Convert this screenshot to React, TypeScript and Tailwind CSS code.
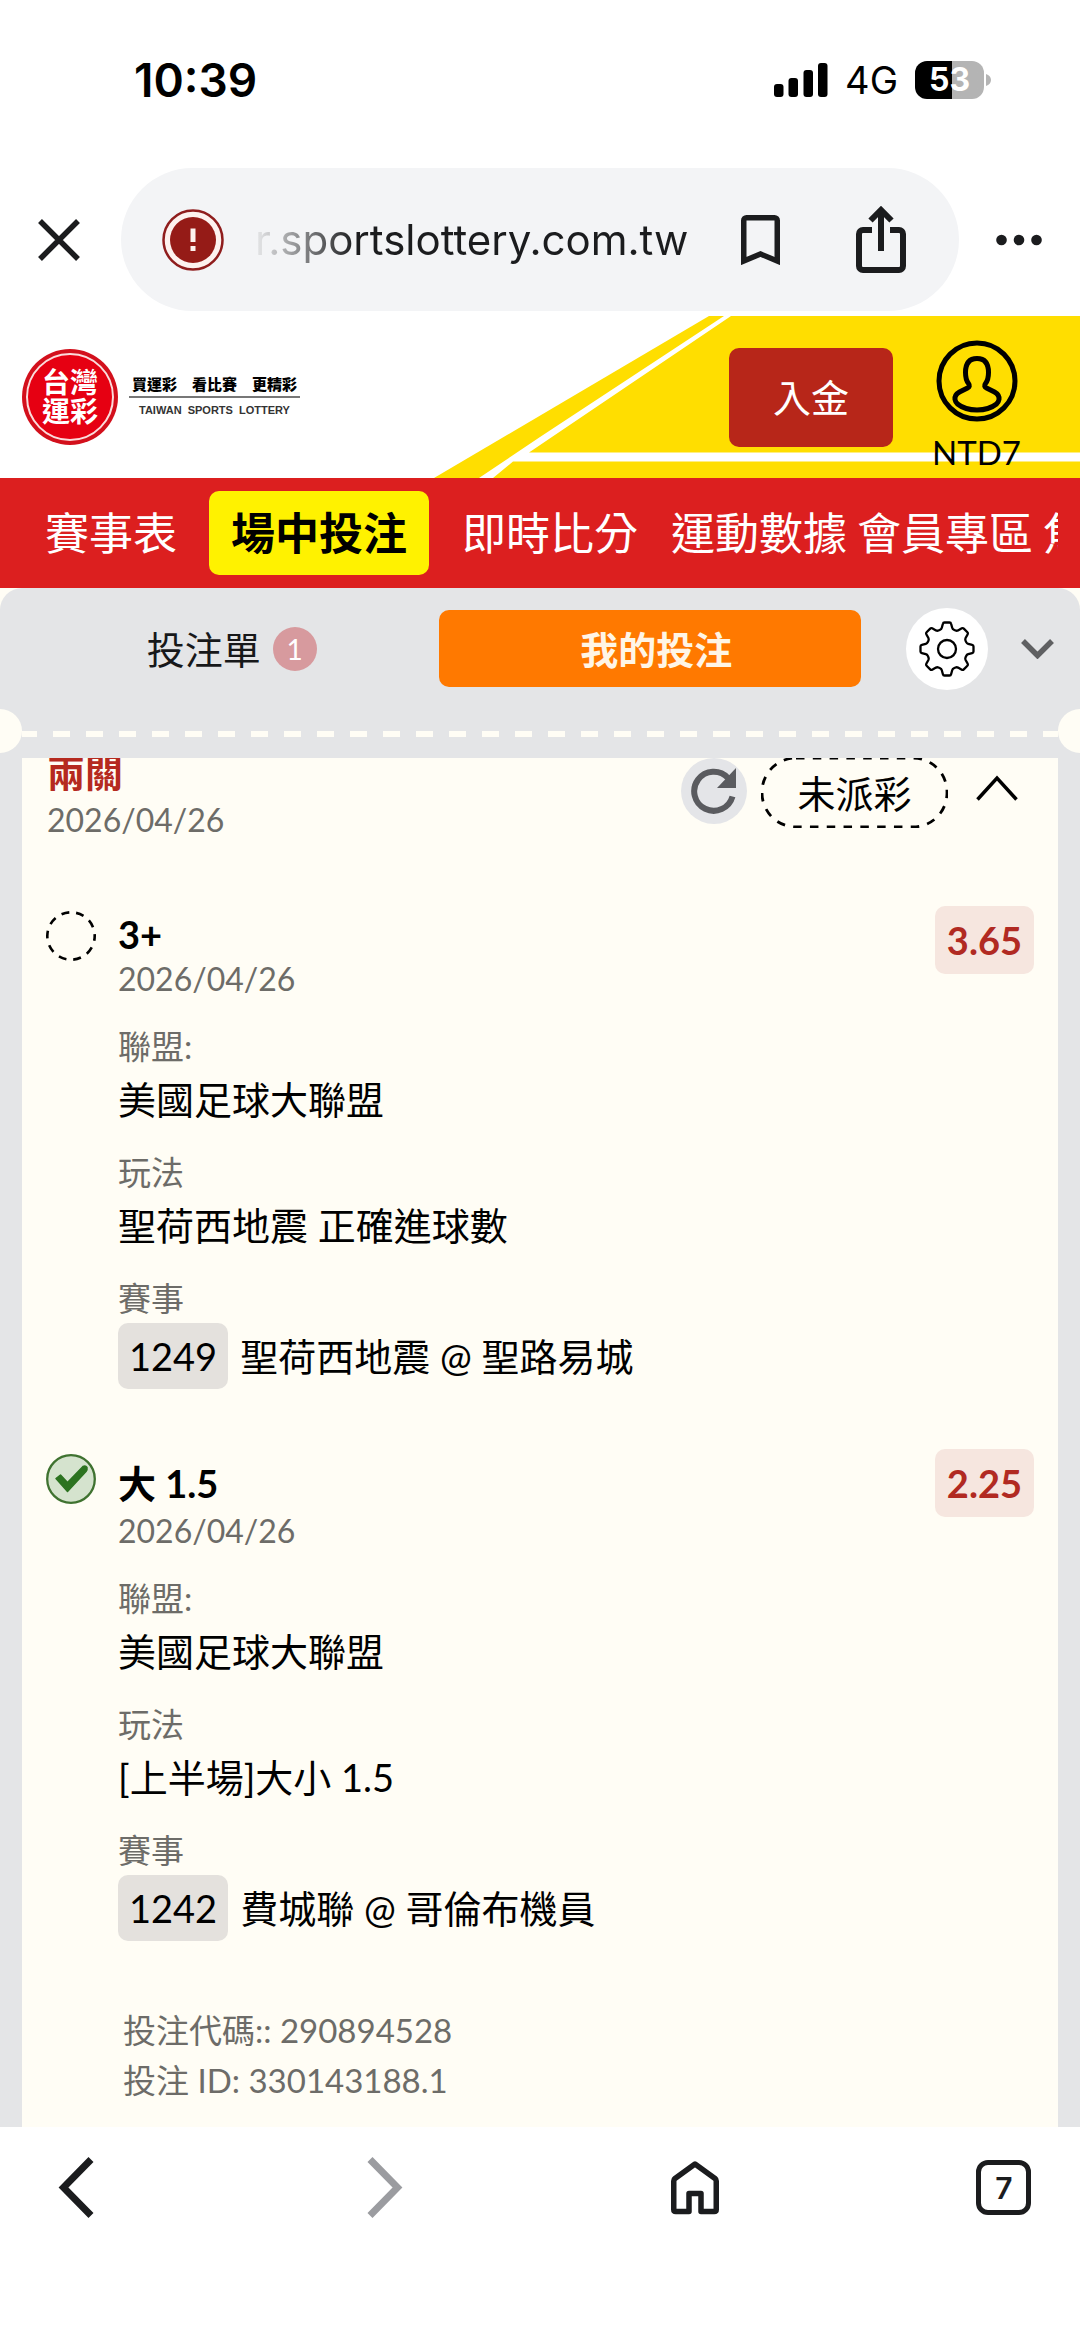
import React from 'react';

interface Selection {
  title: string;
  date: string;
  odds: string;
  league: string;
  market: string;
  eventNo: string;
  match: string;
  won: boolean;
}

const selections: Selection[] = [
  {
    title: '3+',
    date: '2026/04/26',
    odds: '3.65',
    league: '美國足球大聯盟',
    market: '聖荷西地震 正確進球數',
    eventNo: '1249',
    match: '聖荷西地震 @ 聖路易城',
    won: false,
  },
  {
    title: '大 1.5',
    date: '2026/04/26',
    odds: '2.25',
    league: '美國足球大聯盟',
    market: '[上半場]大小 1.5',
    eventNo: '1242',
    match: '費城聯 @ 哥倫布機員',
    won: true,
  },
];

const StatusBar: React.FC = () => (
  <div className="flex h-[160px] items-center justify-between pl-[134px] pr-[89px] font-['Inter','Liberation_Sans',sans-serif] text-black">
    <span className="text-[46px] font-semibold leading-none">10:39</span>
    <div className="flex items-center gap-[17px]">
      <svg width="54" height="34" viewBox="0 0 54 34" aria-hidden="true">
        <rect x="0" y="21" width="9.5" height="13" rx="3" />
        <rect x="14.5" y="15" width="9.5" height="19" rx="3" />
        <rect x="29.5" y="7" width="9.5" height="27" rx="3" />
        <rect x="44" y="0" width="9.5" height="34" rx="3" />
      </svg>
      <span className="text-[38px] leading-none">4G</span>
      <div className="flex items-center gap-[2px]">
        <div className="flex h-[38px] w-[69px] items-center justify-center rounded-[12px] bg-linear-to-r from-black from-53% to-[#b4b4b4] to-53%">
          <span className="text-[32px] font-bold leading-none text-white">53</span>
        </div>
        <svg width="5" height="12" viewBox="0 0 5 12" aria-hidden="true">
          <path d="M0 0c3 1 5 3 5 6s-2 5-5 6z" fill="#b4b4b4" />
        </svg>
      </div>
    </div>
  </div>
);

const AddressBar: React.FC = () => (
  <div className="flex h-[156px] items-start justify-between px-[38px] pt-2 text-[#1b1c1e]">
    <button aria-label="關閉" className="flex h-[143px] items-center">
      <svg width="42" height="42" viewBox="0 0 42 42" fill="none" stroke="currentColor" strokeWidth="5.5">
        <path d="M2 2l38 38M40 2L2 40" />
      </svg>
    </button>
    <div className="ml-[41px] mr-[37px] flex h-[143px] flex-1 items-center rounded-full bg-[#f3f4f6] pl-[41px] pr-[53px]">
      <svg width="62" height="62" viewBox="0 0 62 62" className="shrink-0" aria-hidden="true">
        <circle cx="31" cy="31" r="29.5" fill="#fdf1ee" stroke="#8f1d1d" strokeWidth="2.5" />
        <circle cx="31" cy="31" r="23" fill="#951b17" />
        <path d="M31 19.5v13.500M31 37v5" stroke="#fdf1ee" strokeWidth="5" />
      </svg>
      <span className="ml-[31px] flex-1 bg-linear-to-r from-[#1b1c1e]/5 to-[#1b1c1e] to-[100px] bg-clip-text font-['Inter','Liberation_Sans',sans-serif] text-[42px] leading-[60px] whitespace-nowrap text-transparent">
        r.sportslottery.com.tw
      </span>
      <button aria-label="書籤" className="mr-[76px] shrink-0">
        <svg width="39" height="50" viewBox="0 0 39 50" fill="none" stroke="currentColor" strokeWidth="5.5">
          <path d="M2.75 46V5.500a2.750 2.750 0 0 1 2.750-2.750h28a2.750 2.750 0 0 1 2.750 2.750V46L19.500 39z" />
        </svg>
      </button>
      <button aria-label="分享" className="shrink-0">
        <svg width="50" height="67" viewBox="0 0 50 67" fill="none" stroke="currentColor" strokeWidth="6">
          <path d="M16 24H7a4 4 0 0 0-4 4v32a4 4 0 0 0 4 4h36a4 4 0 0 0 4-4V28a4 4 0 0 0-4-4h-9" />
          <path d="M25 45V5M14.500 14.500L25 4l10.500 10.500" />
        </svg>
      </button>
    </div>
    <button aria-label="更多" className="flex h-[143px] items-center">
      <svg width="46" height="12" viewBox="0 0 46 12" fill="currentColor">
        <circle cx="5.5" cy="6" r="5.3" />
        <circle cx="23" cy="6" r="5.3" />
        <circle cx="40.5" cy="6" r="5.3" />
      </svg>
    </button>
  </div>
);

const SiteHeader: React.FC = () => (
  <header className="relative flex h-[162px] items-start justify-between pl-[22px] pr-[60px] text-black">
    {/* Yellow swoosh behind the right half */}
    <svg
      className="absolute inset-y-0 right-0 h-full"
      width="646"
      height="162"
      viewBox="434 316 646 162"
      aria-hidden="true"
    >
      <path d="M709 316H1080V478H434z" fill="#ffde00" />
      <path d="M724 316h7L529 452.500H1080v9H513L493 478H479L540 437z" fill="#fff" />
    </svg>

    <a href="#home" className="relative flex items-center pt-[33px]" aria-label="台灣運彩">
      <span className="flex size-24 items-center justify-center rounded-full bg-[#d3101c] p-1">
        <span className="flex size-[88px] flex-col items-center justify-center rounded-full border-2 border-[#fbdcdc] bg-[#e60012] text-[28px] font-bold leading-[29px] text-white">
          <span>台灣</span>
          <span>運彩</span>
        </span>
      </span>
      <span className="ml-[11px] flex flex-col items-center">
        <span className="text-[15px] font-black leading-6 whitespace-nowrap">買運彩　看比賽　更精彩</span>
        <span className="h-[2px] w-[171px] bg-[#777]" />
        <span className="font-['Liberation_Sans',sans-serif] text-[11px] font-bold leading-6 whitespace-nowrap text-[#333]">
          TAIWAN&nbsp; SPORTS&nbsp; LOTTERY
        </span>
      </span>
    </a>

    <div className="relative flex items-start gap-10">
      <button className="mt-8 h-[99px] w-[164px] rounded-[10px] bg-[#b72619] text-[38px] text-white">入金</button>
      <button className="mt-6 flex w-[87px] flex-col items-center">
        <svg width="82" height="82" viewBox="0 0 82 82" fill="none" stroke="#000" strokeWidth="5">
          <circle cx="41" cy="41" r="38" />
          <path d="M41 18.500c-8 0-11.500 5.500-11.500 14 0 5 1 8.500 3 11 1.500 2 1 3.500-1 4.500l-8 4c-3.500 2-5 4-4.500 7.500.3 2 1 3 2.500 4.500 5 4 12 6 19.500 6s14.500-2 19.500-6c1.500-1.500 2.200-2.500 2.500-4.500.5-3.500-1-5.500-4.500-7.500l-8-4c-2-1-2.500-2.500-1-4.500 2-2.500 3-6 3-11 0-8.500-3.500-14-11.500-14z" />
        </svg>
        <span className="mt-2 text-[33px] leading-[44px]">NTD7</span>
      </button>
    </div>
  </header>
);

const MainNav: React.FC = () => (
  <nav className="bg-[#dc1f1f] pl-[13px] pr-[22px]">
    <div className="flex h-[110px] items-center overflow-hidden text-[44px] leading-none whitespace-nowrap text-white">
      <a href="#schedule" className="px-8">賽事表</a>
      <a
        href="#live"
        className="flex h-[84px] items-center rounded-[10px] bg-[#fff200] px-[22px] font-bold text-black"
      >
        場中投注
      </a>
      <a href="#scores" className="px-[33px]">即時比分</a>
      <a href="#stats" className="mr-[10px]">運動數據</a>
      <a href="#member" className="mr-[10px]">會員專區</a>
      <a href="#focus">焦</a>
    </div>
  </nav>
);

const SlipTabs: React.FC = () => (
  <div className="flex h-[121px] items-center pr-[26px]">
    <button className="flex flex-1 items-center justify-center gap-3 pl-6 text-[38px] leading-none whitespace-nowrap text-[#17181a]">
      投注單
      <span className="flex size-11 items-center justify-center rounded-full bg-[#d79a9e] text-[28px] text-white">1</span>
    </button>
    <button className="h-[77px] w-[40%] shrink-0 rounded-[10px] bg-[#ff7900] pl-3 text-[38px] font-bold leading-none text-[#fff5e6]">
      我的投注
    </button>
    <button
      aria-label="設定"
      className="ml-[45px] flex size-[82px] shrink-0 items-center justify-center rounded-full bg-white"
    >
      <svg width="56" height="56" viewBox="0 0 56 56" fill="none" stroke="#000" strokeWidth="2.3" strokeLinejoin="round">
        <circle cx="28" cy="28" r="9" />
        <path d="M25.500 1.500h5q1.300 0 1.600 1.300l1.100 4q.4 1.400 1.700 2l1.600.7q1.300.5 2.500-.1l3.800-2.100q1.100-.6 2 .3l3.600 3.600q.9.900.3 2l-2.100 3.800q-.6 1.200-.1 2.500l.7 1.600q.6 1.300 2 1.700l4 1.100q1.300.3 1.300 1.600v5q0 1.300-1.300 1.600l-4 1.100q-1.400.4-2 1.700l-.7 1.600q-.5 1.300.1 2.500l2.100 3.800q.6 1.100-.3 2l-3.600 3.600q-.9.900-2 .3l-3.800-2.100q-1.200-.6-2.500-.1l-1.600.7q-1.300.6-1.700 2l-1.100 4q-.3 1.300-1.600 1.300h-5q-1.300 0-1.600-1.300l-1.100-4q-.4-1.400-1.700-2l-1.600-.7q-1.300-.5-2.500.1l-3.800 2.100q-1.100.6-2-.3l-3.600-3.600q-.9-.9-.3-2l2.100-3.800q.6-1.200.1-2.500l-.7-1.600q-.6-1.300-2-1.700l-4-1.100q-1.300-.3-1.300-1.600v-5q0-1.300 1.300-1.600l4-1.100q1.400-.4 2-1.700l.7-1.600q.5-1.300-.1-2.500l-2.100-3.800q-.6-1.100.3-2l3.600-3.600q.9-.9 2-.3l3.800 2.100q1.200.6 2.500.1l1.600-.7q1.300-.6 1.700-2l1.100-4q.3-1.300 1.600-1.300z" />
      </svg>
    </button>
    <button aria-label="收合" className="ml-[33px] shrink-0">
      <svg width="33" height="20" viewBox="0 0 33 20" fill="none" stroke="#5f6062" strokeWidth="5.5">
        <path d="M2 2l14.500 14.500L31 2" />
      </svg>
    </button>
  </div>
);

// Ticket tear line with a notch at both edges
const TearLine: React.FC = () => (
  <div className="flex h-[44px] items-center justify-between overflow-hidden">
    <span className="-ml-[22px] size-[44px] shrink-0 rounded-full bg-[#fffdf5]" />
    <svg className="mt-[5px] h-[6px] flex-1" aria-hidden="true">
      <line x1="0" y1="3" x2="100%" y2="3" stroke="#fffdf5" strokeWidth="6" strokeDasharray="17 16" strokeDashoffset="2" />
    </svg>
    <span className="-mr-[22px] size-[44px] shrink-0 rounded-full bg-[#fffdf5]" />
  </div>
);

const StatusIcon: React.FC<{ won: boolean }> = ({ won }) =>
  won ? (
    <svg width="50" height="50" viewBox="0 0 50 50" className="mt-[5px] shrink-0" aria-label="中獎">
      <circle cx="25" cy="25" r="23.8" fill="#d5e3ce" stroke="#3f7230" strokeWidth="2.3" />
      <path d="M10 24.500L14.500 21L21.500 28.500L37 12.500Q39.500 11 41 13.500Q41.500 15.500 40 17.500L21.500 37.500z" fill="#2c7320" stroke="#2c7320" strokeWidth="1.5" strokeLinejoin="round" />
    </svg>
  ) : (
    <svg width="50" height="50" viewBox="0 0 50 50" className="mt-[5px] shrink-0" aria-label="未派彩">
      <circle cx="25" cy="25" r="23.7" fill="none" stroke="#000" strokeWidth="2.6" strokeDasharray="7.9 7" strokeDashoffset="3" />
    </svg>
  );

const Field: React.FC<{ label: string; children: React.ReactNode }> = ({ label, children }) => (
  <div className="mt-5">
    <dt className="text-[33px] leading-[50px] text-[#6d6c68]">{label}</dt>
    <dd className="text-[38px] leading-[56px] text-black">{children}</dd>
  </div>
);

const SelectionRow: React.FC<{ item: Selection }> = ({ item }) => (
  <li className="flex items-start gap-[22px]">
    <StatusIcon won={item.won} />
    <div className="flex-1 pt-[5px]">
      {/* Natural line height: a Chinese title makes a taller line than a Latin one */}
      <h3 className="text-[38px] font-bold leading-[normal] text-black">{item.title}</h3>
      <p className="text-[32px] leading-[44px] text-[#6d6c68]">{item.date}</p>
      <dl>
        <Field label="聯盟:">{item.league}</Field>
        <Field label="玩法">{item.market}</Field>
        <Field label="賽事">
          <span className="flex items-center gap-3">
            <span className="rounded-[10px] bg-[#e4e1dd] px-[11px] leading-[66px]">{item.eventNo}</span>
            {item.match}
          </span>
        </Field>
      </dl>
    </div>
    <span className="rounded-[10px] bg-[#f6e6df] px-3 text-[38px] font-bold leading-[68px] text-[#b12a22]">
      {item.odds}
    </span>
  </li>
);

const TicketHeader: React.FC = () => (
  <div className="flex items-start">
    <div className="-mt-2 flex-1 pl-px">
      <h2 className="text-[38px] font-bold leading-[44px] text-[#b52a1f]">兩關</h2>
      <p className="mt-1 text-[32px] leading-[44px] text-[#6d6c68]">2026/04/26</p>
    </div>
    <button aria-label="重新整理" className="flex size-[66px] items-center justify-center rounded-full bg-[#e4e5e8]">
      <svg width="46" height="46" viewBox="0 0 46 46" fill="none">
        <path d="M41.500 28.500A19.500 19.500 0 1 1 37 10" stroke="#5a5b5f" strokeWidth="6" />
        <path d="M45 0v20H26z" fill="#5a5b5f" />
      </svg>
    </button>
    <span className="relative ml-[14px] flex h-[70px] w-[187px] items-center justify-center text-[38px] leading-none text-black">
      <svg className="absolute inset-0 size-full" fill="none" aria-hidden="true">
        <rect x="1" y="0" width="185" height="69" rx="34" stroke="#000" strokeWidth="2.8" strokeDasharray="8.5 8.3" />
      </svg>
      未派彩
    </span>
    <button aria-label="收起" className="ml-7 mr-4 mt-[17px]">
      <svg width="42" height="26" viewBox="0 0 42 26" fill="none" stroke="#000" strokeWidth="3.5">
        <path d="M1.500 24.500L21 3l19.500 21.500" />
      </svg>
    </button>
  </div>
);

const BottomBar: React.FC = () => (
  <nav className="flex h-[214px] items-start justify-between bg-white px-12 pt-[30px] text-[#1b1c1e]">
    <button aria-label="上一頁" className="flex h-[61px] w-14 items-center justify-center">
      <svg width="36" height="61" viewBox="0 0 36 61" fill="none" stroke="currentColor" strokeWidth="7">
        <path d="M33 2.500L5.500 30.500l27.500 28" />
      </svg>
    </button>
    <button aria-label="下一頁" className="flex h-[61px] w-14 items-center justify-center text-[#9b9ca0]">
      <svg width="36" height="61" viewBox="0 0 36 61" fill="none" stroke="currentColor" strokeWidth="7">
        <path d="M3 2.500l27.500 28-27.500 28" />
      </svg>
    </button>
    {/* Outline of the house wraps round a narrow door */}
    <button aria-label="首頁" className="flex h-[61px] w-14 items-center justify-center">
      <svg width="48" height="54" viewBox="0 0 48 54" fill="none" stroke="currentColor" strokeWidth="5.5" strokeLinejoin="round">
        <path d="M2.750 20Q2.750 18.500 4 17.500L24 3l20 14.500Q45.250 18.500 45.250 20V48.500Q45.250 50.500 43.250 50.500H30V32.500H18v18H4.750Q2.750 50.500 2.750 48.500z" />
      </svg>
    </button>
    <button aria-label="分頁" className="flex h-[61px] w-14 items-center justify-center">
      <span className="flex size-[55px] items-center justify-center rounded-[12px] border-[5px] border-current font-['Inter','Liberation_Sans',sans-serif] text-[30px] font-semibold leading-none">
        7
      </span>
    </button>
  </nav>
);

const App: React.FC = () => {
  return (
    <div
      lang="zh-Hant"
      className="flex min-h-screen flex-col bg-white font-['Lato','Noto_Sans_CJK_TC',sans-serif]"
    >
      <StatusBar />
      <AddressBar />
      <SiteHeader />
      <MainNav />

      <main className="flex flex-1 flex-col bg-[#fffdf5]">
        <section className="flex flex-1 flex-col rounded-t-[22px] bg-[#e4e5e7]">
          <SlipTabs />
          <TearLine />
          <article className="mx-[22px] mt-[5px] flex-1 overflow-hidden bg-[#fffdf5] px-6 pb-4">
            <TicketHeader />
            <ul className="mt-[64px] flex flex-col gap-[60px]">
              {selections.map((item) => (
                <SelectionRow key={item.eventNo} item={item} />
              ))}
            </ul>
            <div className="mt-[64px] pl-[77px] text-[33px] leading-[50px] text-[#6d6c68]">
              <p>投注代碼:: 290894528</p>
              <p>投注 ID: 330143188.1</p>
            </div>
          </article>
        </section>
      </main>

      <BottomBar />
    </div>
  );
};

export default App;
